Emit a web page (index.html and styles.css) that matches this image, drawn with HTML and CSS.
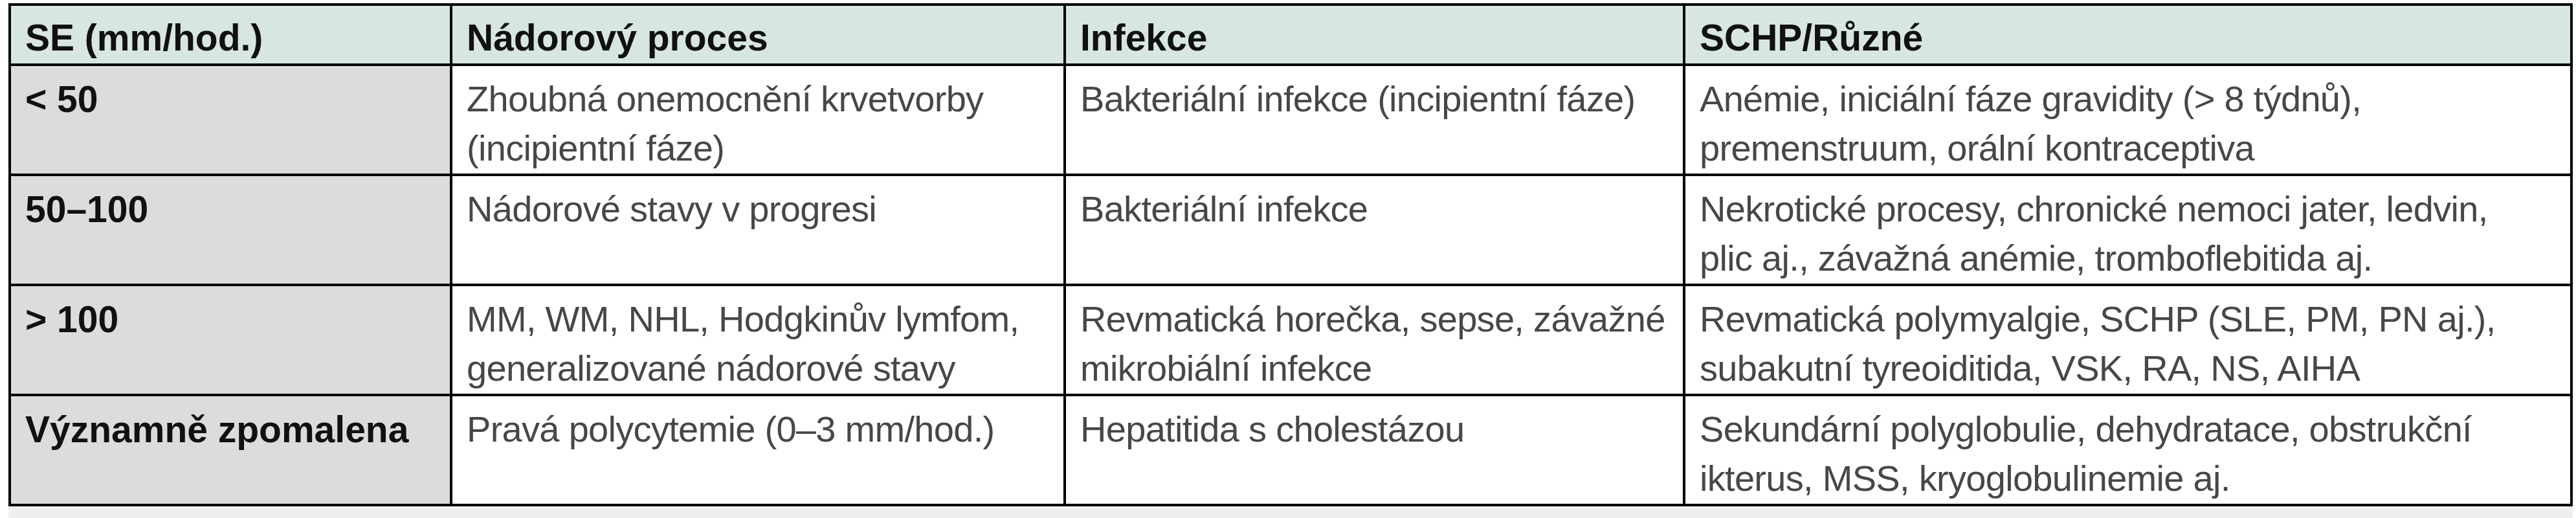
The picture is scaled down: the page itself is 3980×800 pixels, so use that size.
FILE: index.html
```html
<!DOCTYPE html>
<html lang="cs">
<head>
<meta charset="utf-8">
<title>SE tabulka</title>
<link rel="stylesheet" href="styles.css">
</head>
<body>
<div class="sheet">
  <table class="se-table">
    <colgroup>
      <col class="c-se">
      <col class="c-tumor">
      <col class="c-inf">
      <col class="c-misc">
    </colgroup>
    <thead>
      <tr class="head-row">
        <th>SE (mm/hod.)</th>
        <th>Nádorový proces</th>
        <th>Infekce</th>
        <th>SCHP/Různé</th>
      </tr>
    </thead>
    <tbody>
      <tr class="body-row">
        <th>&lt; 50</th>
        <td>Zhoubná onemocnění krvetvorby<br>(incipientní fáze)</td>
        <td>Bakteriální infekce (incipientní fáze)</td>
        <td>Anémie, iniciální fáze gravidity (&gt; 8 týdnů),<br>premenstruum, orální kontraceptiva</td>
      </tr>
      <tr class="body-row">
        <th>50–100</th>
        <td>Nádorové stavy v progresi</td>
        <td>Bakteriální infekce</td>
        <td>Nekrotické procesy, chronické nemoci jater, ledvin,<br>plic aj., závažná anémie, tromboflebitida aj.</td>
      </tr>
      <tr class="body-row">
        <th>&gt; 100</th>
        <td>MM, WM, NHL, Hodgkinův lymfom,<br>generalizované nádorové stavy</td>
        <td>Revmatická horečka, sepse, závažné<br>mikrobiální infekce</td>
        <td>Revmatická polymyalgie, SCHP (SLE, PM, PN aj.),<br>subakutní tyreoiditida, VSK, RA, NS, AIHA</td>
      </tr>
      <tr class="body-row">
        <th>Významně zpomalena</th>
        <td>Pravá polycytemie (0–3 mm/hod.)</td>
        <td>Hepatitida s cholestázou</td>
        <td>Sekundární polyglobulie, dehydratace, obstrukční<br>ikterus, MSS, kryoglobulinemie aj.</td>
      </tr>
    </tbody>
  </table>
</div>
</body>
</html>
```

FILE: styles.css
```css
html, body {
  margin: 0;
  padding: 0;
  background: #ffffff;
}

body {
  padding: 5px 0 0 13px;
  font-family: "Liberation Sans", Arial, sans-serif;
}

.sheet {
  width: 3962px;
  height: 795px;
  background: #efefef;
}

.se-table {
  width: 3962px;
  border-collapse: collapse;
  table-layout: fixed;
  font-size: 56px;
  line-height: 76px;
}

.c-se { width: 682px; }
.c-tumor { width: 948px; }
.c-inf { width: 957px; }
.c-misc { width: auto; }

.se-table th,
.se-table td {
  border: 4px solid #000000;
  text-align: left;
  vertical-align: top;
  white-space: nowrap;
  overflow: hidden;
  padding: 0 6px 0 22px;
}

.head-row th {
  height: 74px;
  padding-top: 11px;
  padding-bottom: 2px;
  background: #d7e6e3;
  color: #111111;
  font-weight: bold;
  font-size: 57px;
}

.body-row th,
.body-row td {
  height: 153px;
  padding-top: 13px;
  padding-bottom: 0;
}

.body-row th {
  background: #dcdcdc;
  color: #111111;
  font-weight: bold;
  font-size: 57px;
}

.body-row td {
  background: #ffffff;
  color: #474747;
  font-weight: normal;
  letter-spacing: -0.7px;
}
```
